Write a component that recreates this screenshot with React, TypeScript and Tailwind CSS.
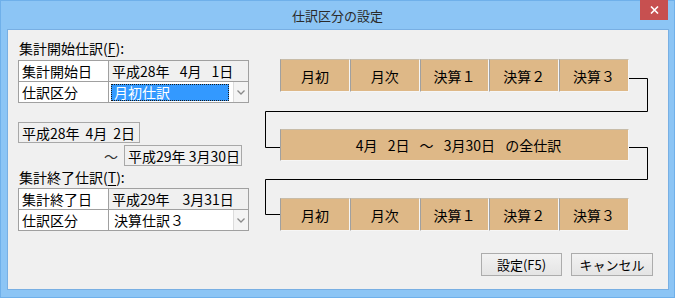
import React from 'react';

const jp = "font-['Noto_Sans_CJK_JP','Noto_Sans',sans-serif]";

const Chevron = () => (
  <svg width="8" height="5" viewBox="0 0 8 5">
    <path d="M0.5 0.5 L4 4 L7.5 0.5" fill="none" stroke="#8a8a8a" strokeWidth="1.3" />
  </svg>
);

const Combo = ({ value, selected }: { value: string; selected?: boolean }) => (
  <div className="flex h-full flex-1 items-center bg-white pl-[2px]">
    <div className="flex h-[18px] flex-1 items-center">
      {selected ? (
        <span className="flex h-[17px] w-[118px] items-center border border-dotted border-[#1a1a1a] bg-[#3399ff] pl-[2px] text-white">
          {value}
        </span>
      ) : (
        <span className="pl-[3px]">{value}</span>
      )}
    </div>
    <div className="flex h-full w-[15px] items-center justify-center border-l border-[#dcdcdc] bg-[#f4f4f4]">
      <Chevron />
    </div>
  </div>
);

const SettingTable = ({ dateLabel, date, combo, selected }: { dateLabel: string; date: string; combo: string; selected?: boolean }) => (
  <div className="flex w-[231px] flex-col border border-[#a0a0a0]">
    <div className="flex h-[21px] border-b border-[#a0a0a0]">
      <div className="flex w-[90px] items-center border-r border-[#a0a0a0] bg-white pl-[3px]">{dateLabel}</div>
      <div className="flex flex-1 items-center whitespace-pre bg-[#f0f0f0] pl-[3px]">{date}</div>
    </div>
    <div className="flex h-[20px]">
      <div className="flex w-[90px] items-center border-r border-[#a0a0a0] bg-white pl-[3px]">仕訳区分</div>
      <Combo value={combo} selected={selected} />
    </div>
  </div>
);

const StageRow = () => (
  <div className="ml-[15px] flex h-[33px] w-[349px]">
    {['月初', '月次', '決算１', '決算２', '決算３'].map((t) => (
      <div
        key={t}
        className="flex flex-1 items-center justify-center border-l border-t border-r border-b border-l-[#a0a0a0] border-t-[#c8bca8] border-r-[#f6f6f6] border-b-[#f6f6f6] bg-[#deb887]"
      >
        {t}
      </div>
    ))}
  </div>
);

export default function App() {
  return (
    <div className={`relative flex h-[298px] w-[675px] flex-col border border-[#6fb0ea] bg-[#8cc5f5] text-[14px] leading-none text-black ${jp}`}>
      {/* title bar */}
      <div className="relative flex h-[28px] items-center justify-center text-[13px] text-[#2a2a2a]">
        仕訳区分の設定
        <div className="absolute right-[6px] top-[-1px] flex h-[20px] w-[28px] items-center justify-center bg-[#c75050]">
          <svg width="9" height="8" viewBox="0 0 9 8">
            <path d="M1 0.5 L8 7.5 M8 0.5 L1 7.5" stroke="#fff" strokeWidth="1.6" />
          </svg>
        </div>
      </div>

      {/* client area */}
      <div className="ml-[6px] flex h-[261px] w-[662px] flex-col border border-[#78afe3] bg-[#f0f0f0]">
        <div className="flex">
          {/* left column */}
          <div className="ml-[11px] flex w-[231px] flex-col">
            <div className="mt-[9px] flex h-[18px] items-center">
              集計開始仕訳(<span className="underline underline-offset-2">F</span>):
            </div>
            <div className="-ml-px mt-[3px]">
              <SettingTable dateLabel="集計開始日" date={'平成28年\u2002 4月\u2002 1日'} combo="月初仕訳" selected />
            </div>
            <div className="-ml-px mt-[19px] flex h-[21px] w-[122px] items-center whitespace-pre border border-[#a8a8a8] pl-[3px]">
              {'平成28年\u2009 4月\u2009 2日'}
            </div>
            <div className="mt-[2px] flex h-[21px] items-center">
              <span className="ml-[85px] w-[20px] text-[#333]">～</span>
              <div className="flex h-full w-[118px] items-center border border-[#a8a8a8] pl-[3px]">平成29年 3月30日</div>
            </div>
            <div className="mt-[2px] flex h-[18px] items-center">
              集計終了仕訳(<span className="underline underline-offset-2">T</span>):
            </div>
            <div className="-ml-px mt-[2px]">
              <SettingTable dateLabel="集計終了日" date={'平成29年\u2002\u2009 3月31日'} combo="決算仕訳３" />
            </div>
          </div>

          {/* right column */}
          <div className="relative ml-[15px] flex w-[384px] flex-col">
            <svg className="absolute inset-0" width="384" height="210" viewBox="0 0 384 210">
              <path d="M364 48.5 H382.5 V81.5 H0.5 V117.5 H15" fill="none" stroke="#000" strokeWidth="1" />
              <path d="M364 117.5 H382.5 V149.5 H0.5 V184.5 H15" fill="none" stroke="#000" strokeWidth="1" />
            </svg>
            <div className="mt-[29px]">
              <StageRow />
            </div>
            <div className="relative ml-[15px] mt-[37px] flex h-[32px] w-[349px] items-center justify-center whitespace-pre border-l border-t border-r border-b border-l-[#a0a0a0] border-t-[#c8bca8] border-r-[#f6f6f6] border-b-[#f6f6f6] bg-[#deb887] pl-[8px]">
              {'4月\u2002 2日\u2002 ～\u2002 3月30日\u2002 の全仕訳'}
            </div>
            <div className="relative mt-[37px]">
              <StageRow />
            </div>
          </div>
        </div>

        {/* buttons */}
        <div className="mt-[22px] flex justify-end gap-[9px] pr-[15px] text-[13px]">
          <button className="flex h-[23px] w-[81px] items-center justify-center border border-[#acacac] bg-gradient-to-b from-[#f2f2f2] to-[#e4e4e4]">
            設定(F5)
          </button>
          <button className="flex h-[23px] w-[82px] items-center justify-center border border-[#acacac] bg-gradient-to-b from-[#f2f2f2] to-[#e4e4e4]">
            キャンセル
          </button>
        </div>
      </div>
    </div>
  );
}
